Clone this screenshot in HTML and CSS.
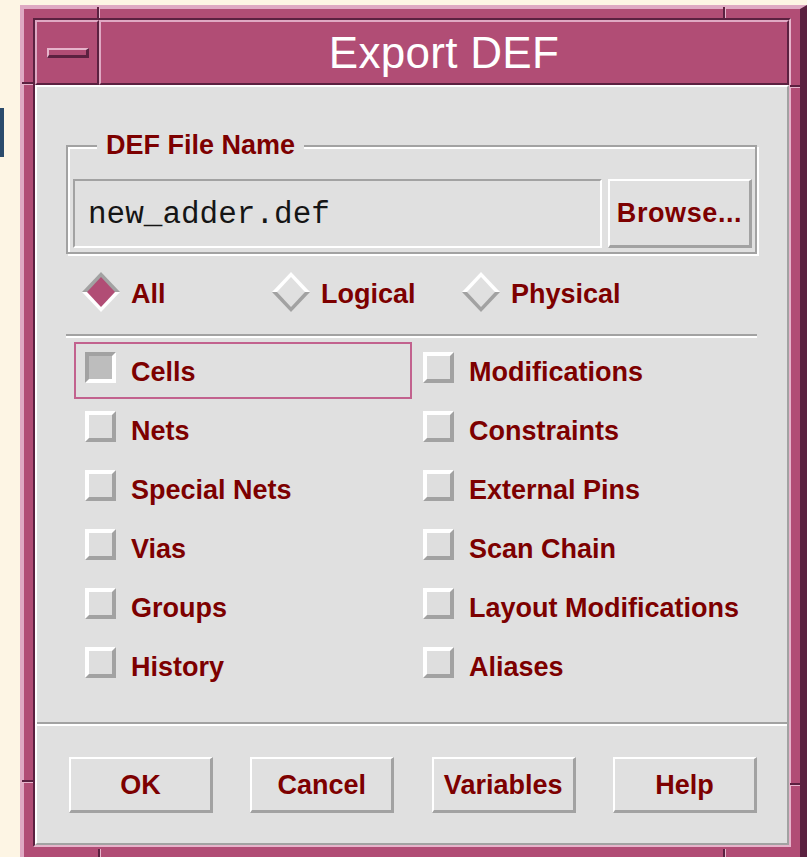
FILE: index.html
```html
<!DOCTYPE html>
<html lang="en">
<head>
<meta charset="utf-8">
<title>Export DEF</title>
<link rel="stylesheet" href="styles.css">
</head>
<body>
<div class="desk">
  <div class="backwin"></div>
  <div class="window">
    <span class="notch notch-v notch-top-l"></span>
    <span class="notch notch-v notch-top-r"></span>
    <span class="notch notch-h notch-left-t"></span>
    <span class="notch notch-h notch-right-t"></span>
    <span class="notch notch-h notch-left-b"></span>
    <span class="notch notch-h notch-right-b"></span>
    <span class="notch notch-v notch-bot-l"></span>
    <span class="notch notch-v notch-bot-r"></span>
    <div class="frame">
      <div class="titlebar">
        <div class="menu-btn"><span class="menu-bar"></span></div>
        <div class="title">Export DEF</div>
      </div>
      <div class="dialog">
        <div class="main">
          <div class="group">
            <span class="group-label">DEF File Name</span>
            <div class="file-row">
              <div class="field">new_adder.def</div>
              <div class="btn browse">Browse...</div>
            </div>
          </div>

          <div class="radios">
            <div class="radio on">
              <svg class="diamond" width="38" height="40" viewBox="0 0 38 40">
                <polygon class="d-top" points="0,20 19,0 38,20"/>
                <polygon class="d-bot" points="0,20 19,40 38,20"/>
                <polygon class="d-fill" points="5,20 19,5 33,20 19,35"/>
              </svg>
              <span>All</span>
            </div>
            <div class="radio">
              <svg class="diamond" width="38" height="40" viewBox="0 0 38 40">
                <polygon class="d-top" points="0,20 19,0 38,20"/>
                <polygon class="d-bot" points="0,20 19,40 38,20"/>
                <polygon class="d-fill" points="5,20 19,5 33,20 19,35"/>
              </svg>
              <span>Logical</span>
            </div>
            <div class="radio">
              <svg class="diamond" width="38" height="40" viewBox="0 0 38 40">
                <polygon class="d-top" points="0,20 19,0 38,20"/>
                <polygon class="d-bot" points="0,20 19,40 38,20"/>
                <polygon class="d-fill" points="5,20 19,5 33,20 19,35"/>
              </svg>
              <span>Physical</span>
            </div>
          </div>

          <div class="sep"></div>

          <div class="checks">
            <div class="check focus checked"><span class="box"></span><span>Cells</span></div>
            <div class="check"><span class="box"></span><span>Modifications</span></div>
            <div class="check"><span class="box"></span><span>Nets</span></div>
            <div class="check"><span class="box"></span><span>Constraints</span></div>
            <div class="check"><span class="box"></span><span>Special Nets</span></div>
            <div class="check"><span class="box"></span><span>External Pins</span></div>
            <div class="check"><span class="box"></span><span>Vias</span></div>
            <div class="check"><span class="box"></span><span>Scan Chain</span></div>
            <div class="check"><span class="box"></span><span>Groups</span></div>
            <div class="check"><span class="box"></span><span>Layout Modifications</span></div>
            <div class="check"><span class="box"></span><span>History</span></div>
            <div class="check"><span class="box"></span><span>Aliases</span></div>
          </div>
        </div>

        <div class="rule"></div>

        <div class="actions">
          <div class="btn action">OK</div>
          <div class="btn action">Cancel</div>
          <div class="btn action">Variables</div>
          <div class="btn action">Help</div>
        </div>
      </div>
    </div>
  </div>
</div>
</body>
</html>
```
FILE: styles.css
```css
* { box-sizing: border-box; }

html, body {
  margin: 0;
  padding: 0;
  background: #fdf5e4;
}

.desk {
  position: relative;
  width: 807px;
  height: 857px;
  overflow: hidden;
  padding-top: 5px;
}

/* edge of another window peeking out on the left */
.backwin {
  position: absolute;
  left: 0;
  top: 108px;
  width: 4px;
  height: 49px;
  background: #2b4b6c;
}

/* window manager frame */
.window {
  position: relative;
  margin-left: 20px;
  width: 787px;
  background: #b14d75;
  border-top: 4px solid #dfa9c3;
  border-left: 4px solid #dfa9c3;
  border-right: 7px solid #5b2140;
  padding: 9px 9px 24px 9px;
}

.notch { position: absolute; width: 0; height: 0; }
.notch-v {
  border-left: 2px solid #5b2140;
  border-right: 1px solid #e6b4cb;
  height: 11px;
}
.notch-h {
  border-top: 2px solid #5b2140;
  border-bottom: 1px solid #e6b4cb;
  width: 11px;
}
.notch-top-l { left: 73px; top: -2px; }
.notch-top-r { left: 699px; top: -2px; }
.notch-bot-l { left: 74px; top: 840px; height: 20px; }
.notch-bot-r { left: 699px; top: 840px; height: 20px; }
.notch-left-t { left: -2px; top: 73px; }
.notch-left-b { left: -2px; top: 771px; }
.notch-right-t { left: 766px; top: 76px; width: 10px; }
.notch-right-b { left: 766px; top: 774px; width: 10px; }

.frame {
  border-top: 2px solid #5b2140;
  border-left: 2px solid #5b2140;
  border-right: 2px solid #e6b4cb;
  border-bottom: 2px solid #e6b4cb;
}

.titlebar {
  display: flex;
  height: 65px;
}

.menu-btn,
.title {
  background: #b14d75;
  border-top: 2px solid #dfa9c3;
  border-left: 2px solid #dfa9c3;
  border-right: 2px solid #5b2140;
  border-bottom: 2px solid #5b2140;
}

.menu-btn {
  width: 64px;
  display: flex;
  align-items: center;
  justify-content: center;
}

.menu-bar {
  display: block;
  width: 42px;
  height: 10px;
  margin-left: 2px;
  border-top: 2px solid #e6b4cb;
  border-left: 2px solid #e6b4cb;
  border-right: 3px solid #5b2140;
  border-bottom: 3px solid #5b2140;
}

.title {
  flex: 1;
  display: flex;
  align-items: center;
  justify-content: center;
  color: #ffffff;
  font: 44px/61px "Liberation Sans", Arial, sans-serif;
  letter-spacing: 0.3px;
}

/* dialog body */
.dialog {
  background: #e0e0e0;
  border-top: 2px solid #ffffff;
  border-left: 2px solid #ffffff;
  border-right: 2px solid #a2a2a2;
  border-bottom: 2px solid #a2a2a2;
  height: 760px;
  font: bold 27px/1 "Liberation Sans", Arial, sans-serif;
  color: #7d0000;
}

.main {
  padding: 0 30px 0 29px;
}

.group {
  position: relative;
  margin-top: 58px;
  border: 2px solid #a2a2a2;
  box-shadow: inset 2px 2px 0 #ffffff, 2px 2px 0 #ffffff;
  padding: 32px 3px 4px 5px;
}

.group-label {
  position: absolute;
  top: -17px;
  left: 29px;
  padding: 0 9px;
  background: #e0e0e0;
  line-height: 30px;
}

.file-row {
  display: flex;
  gap: 6px;
  height: 69px;
}

.field {
  flex: 1;
  display: flex;
  align-items: center;
  padding-left: 13px;
  padding-top: 2px;
  border-top: 2px solid #a2a2a2;
  border-left: 2px solid #a2a2a2;
  border-right: 2px solid #ffffff;
  border-bottom: 2px solid #ffffff;
  font: 31px/1 "Liberation Mono", "Courier New", monospace;
  color: #151515;
}

.btn {
  display: flex;
  align-items: center;
  justify-content: center;
  background: #e0e0e0;
  border-top: 2px solid #ffffff;
  border-left: 2px solid #ffffff;
  border-right: 3px solid #a2a2a2;
  border-bottom: 3px solid #a2a2a2;
}

.browse {
  width: 144px;
  letter-spacing: 0.6px;
}

.radios {
  display: grid;
  grid-template-columns: 190px 190px 1fr;
  margin: 18px 0 0 16px;
  height: 40px;
}

.radio {
  display: flex;
  align-items: center;
  gap: 11px;
}

.radio span { padding-top: 4px; }

.diamond { display: block; flex: none; }
.d-top { fill: #ffffff; }
.d-bot { fill: #a2a2a2; }
.d-fill { fill: #e0e0e0; }
.radio.on .d-top { fill: #a2a2a2; }
.radio.on .d-bot { fill: #ffffff; }
.radio.on .d-fill { fill: #b14d75; }

.sep {
  margin-top: 22px;
  height: 4px;
  border-top: 2px solid #a2a2a2;
  border-bottom: 2px solid #ffffff;
}

.checks {
  margin: 4px 0 0 8px;
  display: grid;
  grid-template-columns: 338px 338px;
  grid-auto-rows: 57px;
  row-gap: 2px;
}

.check {
  display: flex;
  align-items: center;
  gap: 15px;
  padding-left: 9px;
  border: 2px solid transparent;
}

.check.focus { border-color: #c2628e; }

.check span:last-child { padding-top: 3px; }

.box {
  width: 31px;
  height: 31px;
  margin-bottom: 6px;
  flex: none;
  background: #dedede;
  border-top: 4px solid #ffffff;
  border-left: 4px solid #ffffff;
  border-right: 4px solid #a2a2a2;
  border-bottom: 4px solid #a2a2a2;
}

.check.checked .box {
  background: #bdbdbd;
  border-top-color: #a2a2a2;
  border-left-color: #a2a2a2;
  border-right-color: #ffffff;
  border-bottom-color: #ffffff;
}

.rule {
  margin-top: 28px;
  height: 4px;
  border-top: 2px solid #a2a2a2;
  border-bottom: 2px solid #ffffff;
}

.actions {
  display: flex;
  justify-content: space-between;
  padding: 31px 30px 0 32px;
}

.action {
  width: 144px;
  height: 56px;
  padding-top: 2px;
}
```
